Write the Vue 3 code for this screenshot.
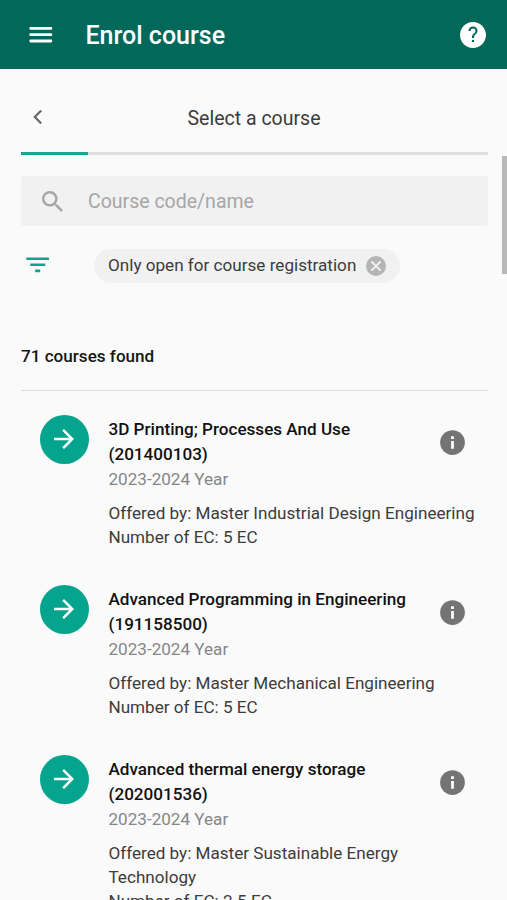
<script setup>
const courses = [
  {
    name: '3D Printing; Processes And Use',
    code: '201400103',
    period: '2023-2024 Year',
    faculty: 'Master Industrial Design Engineering',
    credits: '5 EC',
  },
  {
    name: 'Advanced Programming in Engineering',
    code: '191158500',
    period: '2023-2024 Year',
    faculty: 'Master Mechanical Engineering',
    credits: '5 EC',
  },
  {
    name: 'Advanced thermal energy storage',
    code: '202001536',
    period: '2023-2024 Year',
    faculty: 'Master Sustainable Energy Technology',
    credits: '2.5 EC',
  },
]
</script>

<template>
  <div class="screen">
    <header class="topbar">
      <svg class="menu" viewBox="0 0 24 18" fill="none" stroke="#fff" stroke-width="2.8" stroke-linecap="round">
        <path d="M1.700 2.400h20.200M1.700 8.700h20.200M1.700 15h20.200" />
      </svg>
      <h1>Enrol course</h1>
      <svg class="help" viewBox="2 2 20 20" fill="#fff">
        <path d="M12 2C6.480 2 2 6.480 2 12s4.480 10 10 10 10-4.480 10-10S17.520 2 12 2zm.8 15.400h-1.600v-1.600h1.600v1.600zm1.960-6.760l-.81.83c-.75.76-1.150 1.300-1.150 2.930h-1.600v-.45c0-1.190.400-1.990 1.050-2.650l1.120-1.130c.33-.32.530-.77.530-1.270a1.900 1.900 0 0 0-3.800 0H8.500a3.500 3.500 0 0 1 7 0c0 .79-.32 1.310-.74 1.740z" />
      </svg>
    </header>

    <main>
      <div class="step">
        <svg class="back" viewBox="0 0 10 16" fill="none" stroke="#686868" stroke-width="2.200">
          <path d="M8.200 1.500 1.800 8l6.400 6.500" />
        </svg>
        <h2>Select a course</h2>
      </div>
      <div class="progress"><div class="progress-value"></div></div>

      <div class="search">
        <svg viewBox="3 3 17.500 17.500" fill="#a6a6a6">
          <path d="M15.500 14h-.79l-.28-.27A6.471 6.471 0 0 0 16 9.500 6.500 6.500 0 1 0 9.500 16c1.610 0 3.090-.59 4.230-1.570l.27.28v.79l5 4.990L20.490 19l-4.990-5zm-6 0C7.010 14 5 11.990 5 9.500S7.010 5 9.500 5 14 7.010 14 9.500 11.990 14 9.500 14z" />
        </svg>
        <span>Course code/name</span>
      </div>

      <div class="filters">
        <svg class="filter" viewBox="0 0 24 16" fill="#0ba590">
          <path d="M.3.500h22.700v2.600H.3zM4.200 6.500h15v2.600h-15zM9.200 12.600h5v2.600h-5z" />
        </svg>
        <div class="chip">
          <span>Only open for course registration</span>
          <svg viewBox="0 0 20 20">
            <circle cx="10" cy="10" r="10" fill="#b5b5b5" />
            <path d="m5.300 5.300 9.400 9.400m0-9.400-9.400 9.400" stroke="#f3f3f3" stroke-width="1.900" />
          </svg>
        </div>
      </div>

      <p class="count">71 courses found</p>

      <section class="list">
        <article v-for="course in courses" :key="course.code" class="course">
          <div class="go">
            <svg viewBox="4 4 16 16" fill="#fff">
              <path d="M12 4l-1.410 1.410L16.170 11H4v2h12.170l-5.580 5.590L12 20l8-8z" />
            </svg>
          </div>
          <div class="details">
            <h3><span>{{ course.name }}</span><br />({{ course.code }})</h3>
            <p class="period">{{ course.period }}</p>
            <p class="meta">Offered by: {{ course.faculty }}</p>
            <p class="meta">Number of EC: {{ course.credits }}</p>
          </div>
          <svg class="info" viewBox="2 2 20 20">
            <circle cx="12" cy="12" r="9.900" fill="#747474" />
            <path d="M10.900 7h2.200v2.100h-2.200zM10.900 10.700h2.200v6.300h-2.200z" fill="#fff" />
          </svg>
        </article>
      </section>
      <div class="scrollbar"></div>
    </main>
  </div>
</template>

<style>
body {
  margin: 0;
  background: #fafafa;
}
</style>

<style scoped>
.screen {
  position: relative;
  width: 507px;
  height: 900px;
  overflow: hidden;
  background: #fafafa;
  color: #3c3c3c;
  font-family: Roboto, "Liberation Sans", sans-serif;
}
h1, h2, h3, p {
  margin: 0;
}
svg {
  display: block;
  flex: none;
}
.topbar {
  box-sizing: border-box;
  height: 69px;
  padding: 1px 21px 0 29px;
  display: flex;
  align-items: center;
  background: #01685a;
}
.menu {
  width: 24px;
  height: 18px;
}
h1 {
  flex: 1;
  margin-left: 32.500px;
  padding-top: 2px;
  color: #fff;
  font-size: 25px;
  font-weight: 500;
  line-height: 32px;
}
.help {
  width: 26px;
  height: 26px;
}
main {
  padding: 0 19px 0 21px;
}
.step {
  height: 83px;
  display: grid;
  grid-template-columns: 40px 1fr 41px;
  align-items: center;
}
.back {
  width: 10px;
  height: 16px;
  margin: 13px 0 0 12px;
}
h2 {
  margin-top: 16px;
  text-align: center;
  font-size: 19.500px;
  font-weight: 400;
  line-height: 28px;
}
.progress {
  height: 3px;
  background: #dedede;
}
.progress-value {
  width: 67px;
  height: 3px;
  background: #18a590;
}
.search {
  height: 50px;
  margin-top: 21px;
  display: flex;
  align-items: center;
  background: #f1f1f1;
  border-radius: 2px;
  color: #a6a6a6;
  font-size: 19.500px;
}
.search svg {
  width: 21px;
  height: 21px;
  margin-left: 21px;
}
.search span {
  margin-left: 25px;
}
.filters {
  margin-top: 23px;
  height: 34px;
  display: flex;
  align-items: center;
}
.filter {
  width: 24px;
  height: 16px;
  margin: 0 0 2px 5px;
}
.chip {
  box-sizing: border-box;
  height: 34px;
  width: 306px;
  margin-left: 44px;
  padding: 0 14px;
  display: flex;
  align-items: center;
  justify-content: space-between;
  border-radius: 17px;
  background: #f1f1f1;
  font-size: 17.120px;
  white-space: nowrap;
}
.chip span {
  padding-bottom: 2px;
}
.chip svg {
  width: 20px;
  height: 20px;
}
.count {
  margin-top: 61px;
  color: #161616;
  font-size: 17.100px;
  font-weight: 500;
  line-height: 25px;
}
.list {
  margin-top: 21px;
  padding-top: 24px;
  border-top: 1px solid #dcdcdc;
}
.course {
  display: flex;
  align-items: flex-start;
  margin-bottom: 36px;
}
.go {
  box-sizing: border-box;
  width: 49px;
  height: 49px;
  flex: none;
  margin-left: 19px;
  padding: 0 1px 1px 0;
  display: flex;
  align-items: center;
  justify-content: center;
  border-radius: 50%;
  background: #05a48e;
}
.go svg {
  width: 20px;
  height: 20px;
}
.details {
  width: 332px;
  margin-left: 19.500px;
  padding-top: 2px;
  font-size: 17.100px;
  line-height: 24px;
}
h3 {
  color: #111;
  font-size: 17.100px;
  font-weight: 500;
  line-height: 25px;
  white-space: nowrap;
}
.period {
  margin-bottom: 10px;
  color: #868686;
}
.meta {
  width: 370px;
}
.info {
  width: 25px;
  height: 25px;
  margin: 15px 0 0 -.5px;
}
.scrollbar {
  position: absolute;
  top: 156px;
  right: 0;
  width: 5px;
  height: 118px;
  background: #b9b9b9;
}
</style>
